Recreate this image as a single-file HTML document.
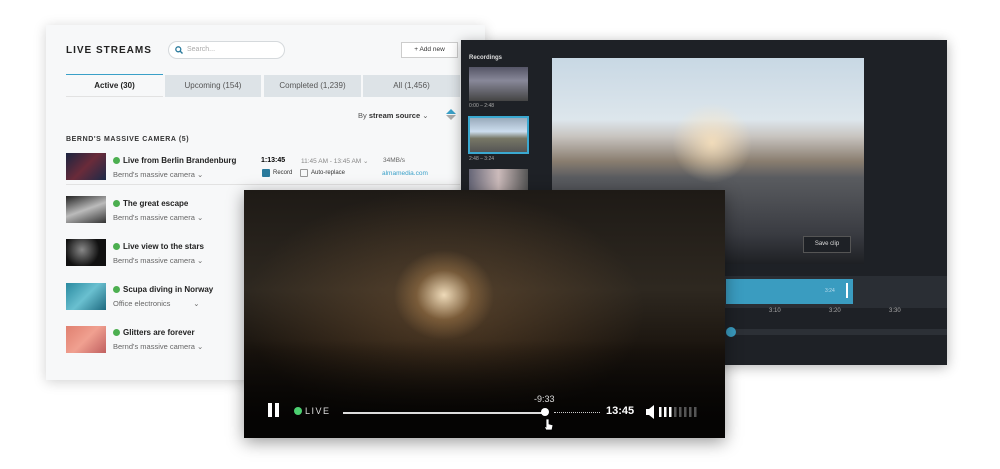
<!DOCTYPE html>
<html><head><style>
*{margin:0;padding:0;box-sizing:border-box}
body{width:1000px;height:469px;background:#fff;position:relative;overflow:hidden;font-family:"Liberation Sans",sans-serif}
.a{position:absolute}
#left{left:46px;top:25px;width:439px;height:355px;background:#f7f8f9;box-shadow:0 2px 12px rgba(0,0,0,.18)}
.tab{position:absolute;top:50px;height:22px;font-size:8px;color:#555;text-align:center;line-height:22px;background:#dde3e7}
.row .th{position:absolute;left:20px;width:40px;height:27px}
.t{position:absolute;left:67px;font-size:8px;font-weight:bold;color:#222}
.t:before{content:"";display:inline-block;width:7px;height:7px;border-radius:50%;background:#4caf50;margin-right:3px;vertical-align:-1px}
.s{position:absolute;left:67px;font-size:7.5px;color:#666}
#dark{left:461px;top:40px;width:486px;height:325px;background:#1e2126;box-shadow:0 2px 12px rgba(0,0,0,.3)}
#front{left:244px;top:190px;width:481px;height:248px;background:#1a140e;box-shadow:0 4px 16px rgba(0,0,0,.4);overflow:hidden}
</style></head><body>
<div id="left" class="a">
 <div class="a" style="left:20px;top:20px;font-size:10px;font-weight:bold;letter-spacing:1px;color:#222">LIVE STREAMS</div>
 <div class="a" style="left:122px;top:16px;width:117px;height:18px;border:1px solid #d5d9dc;border-radius:9px;background:#fff;font-size:7px;color:#aaa;line-height:16px;padding-left:18px">Search...
  <svg class="a" style="left:6px;top:4px" width="8" height="8"><circle cx="3.3" cy="3.3" r="2.5" fill="none" stroke="#2a7a9c" stroke-width="1.3"/><path d="M5 5l2.5 2.5" stroke="#2a7a9c" stroke-width="1.4"/></svg></div>
 <div class="a" style="left:355px;top:17px;width:57px;height:16px;border:1px solid #ccc;background:#fff;font-size:6.5px;text-align:center;line-height:14px;color:#333">+ Add new</div>
 <div class="a" style="left:20px;top:49px;width:97px;height:2px;background:#3aa0c8"></div>
 <div class="tab" style="left:20px;width:97px;background:#f7f8f9;color:#222;font-weight:bold;border-bottom:1px solid #e2e2e2">Active (30)</div>
 <div class="tab" style="left:119px;width:96px">Upcoming (154)</div>
 <div class="tab" style="left:218px;width:97px">Completed (1,239)</div>
 <div class="tab" style="left:317px;width:97px">All (1,456)</div>
 <div class="a" style="left:312px;top:86px;font-size:7.5px;color:#555">By <b style="color:#333">stream source</b> ⌄</div>
 <div class="a" style="left:400px;top:84px;width:0;height:0;border:5px solid transparent;border-bottom:5px solid #3aa0c8;border-top:0"></div>
 <div class="a" style="left:400px;top:90px;width:0;height:0;border:5px solid transparent;border-top:5px solid #aaa;border-bottom:0"></div>
 <div class="a" style="left:20px;top:111px;font-size:7px;font-weight:bold;letter-spacing:.6px;color:#333">BERND'S MASSIVE CAMERA (5)</div>
 <div class="row">
  <div class="th a" style="top:128px;background:linear-gradient(135deg,#1a2440,#6a2b3a 50%,#1c2a48)"></div>
  <div class="t" style="top:131px">Live from Berlin Brandenburg</div><div class="s" style="top:145px">Bernd's massive camera ⌄</div>
  <div class="a" style="left:215px;top:132px;font-size:7px;font-weight:bold">1:13:45</div>
  <div class="a" style="left:255px;top:132px;font-size:6.5px;color:#888">11:45 AM - 13:45 AM ⌄</div>
  <div class="a" style="left:337px;top:132px;font-size:6.5px;color:#666">34MB/s</div>
  <div class="a" style="left:216px;top:144px;width:8px;height:8px;background:#2a7a9c;border-radius:1px"></div>
  <div class="a" style="left:227px;top:145px;font-size:6px;color:#333">Record</div>
  <div class="a" style="left:254px;top:144px;width:8px;height:8px;border:1px solid #999;border-radius:1px"></div>
  <div class="a" style="left:265px;top:145px;font-size:6px;color:#333">Auto-replace</div>
  <div class="a" style="left:336px;top:145px;font-size:6.5px;color:#3aa0c8">almamedia.com</div>
  <div class="a" style="left:20px;top:159px;width:394px;height:1px;background:#e2e2e2"></div>
  <div class="th a" style="top:171px;background:linear-gradient(160deg,#222,#bbb 50%,#333)"></div>
  <div class="t" style="top:174px">The great escape</div><div class="s" style="top:188px">Bernd's massive camera ⌄</div>
  <div class="th a" style="top:214px;background:radial-gradient(circle at 40% 40%,#888,#111 60%)"></div>
  <div class="t" style="top:217px">Live view to the stars</div><div class="s" style="top:231px">Bernd's massive camera ⌄</div>
  <div class="th a" style="top:258px;background:linear-gradient(135deg,#2a8aa0,#6ac0d0,#1e6a80)"></div>
  <div class="t" style="top:260px">Scupa diving in Norway</div><div class="s" style="top:274px">Office electronics &nbsp; &nbsp; &nbsp; &nbsp; &nbsp; ⌄</div>
  <div class="th a" style="top:301px;background:linear-gradient(135deg,#e08070,#f0a090,#c06060)"></div>
  <div class="t" style="top:303px">Glitters are forever</div><div class="s" style="top:317px">Bernd's massive camera ⌄</div>
 </div>
</div>
<div id="dark" class="a">
 <div class="a" style="left:8px;top:15px;font-size:6px;font-weight:bold;color:#ddd">Recordings</div>
 <div class="a" style="left:8px;top:27px;width:59px;height:34px;background:linear-gradient(#556,#889 40%,#444)"></div>
 <div class="a" style="left:8px;top:63px;font-size:5px;color:#aaa">0:00 – 2:48</div>
 <div class="a" style="left:7px;top:76px;width:61px;height:38px;border:2px solid #3aa8d0;background:linear-gradient(#9ab 0%,#cde 40%,#776 60%,#555)"></div>
 <div class="a" style="left:8px;top:116px;font-size:5px;color:#aaa">2:48 – 3:24</div>
 <div class="a" style="left:8px;top:129px;width:59px;height:22px;background:linear-gradient(90deg,#667,#cbb,#555)"></div>
 <div class="a" style="left:91px;top:18px;width:312px;height:206px;background:radial-gradient(ellipse 40px 40px at 160px 85px,rgba(255,230,190,.8),transparent),linear-gradient(#c8d8e4 0%,#dde6ec 30%,#c8c4c0 38%,#8a7e70 50%,#5a5c60 58%,#3a3c42 85%,#1e2024)"></div>
 <div class="a" style="left:342px;top:196px;width:48px;height:17px;border:1px solid #555;background:#1e2126;color:#ddd;font-size:6px;text-align:center;line-height:15px">Save clip</div>
 <div class="a" style="left:0;top:236px;width:486px;height:32px;background:#2a2e34"></div>
 <div class="a" style="left:265px;top:239px;width:127px;height:25px;background:#3a9cc0"></div>
 <div class="a" style="left:385px;top:243px;width:2px;height:15px;background:#fff"></div>
 <div class="a" style="left:364px;top:248px;font-size:5px;color:#bde">3:24</div>
 <div class="a" style="left:308px;top:268px;font-size:6px;color:#aaa">3:10</div>
 <div class="a" style="left:368px;top:268px;font-size:6px;color:#aaa">3:20</div>
 <div class="a" style="left:428px;top:268px;font-size:6px;color:#aaa">3:30</div>
 <div class="a" style="left:265px;top:289px;width:221px;height:6px;background:#2c3036"></div>
 <div class="a" style="left:265px;top:287px;width:10px;height:10px;border-radius:50%;background:#3a9cc0"></div>
</div>
<div id="front" class="a">
 <div class="a" style="left:0;top:0;width:481px;height:248px;background:radial-gradient(ellipse 50px 45px at 200px 105px,rgba(255,235,200,.9),rgba(200,150,90,.35) 55%,transparent),radial-gradient(ellipse 200px 120px at 200px 120px,rgba(140,100,60,.45),transparent),linear-gradient(#1e1a16,#2e2820 40%,#1a140e 65%,#0a0806)"></div>
 <div class="a" style="left:0;top:150px;width:481px;height:98px;background:linear-gradient(rgba(0,0,0,0),#050403 80%)"></div>
 <div class="a" style="left:24px;top:213px;width:4px;height:14px;background:#fff"></div>
 <div class="a" style="left:31px;top:213px;width:4px;height:14px;background:#fff"></div>
 <div class="a" style="left:50px;top:217px;width:8px;height:8px;border-radius:50%;background:#4ccf70"></div>
 <div class="a" style="left:61px;top:216px;font-size:9px;color:#ddd;letter-spacing:1.5px">LIVE</div>
 <div class="a" style="left:99px;top:222px;width:202px;height:1.5px;background:#ddd"></div>
 <div class="a" style="left:297px;top:218px;width:8px;height:8px;border-radius:50%;background:#fff"></div>
 <div class="a" style="left:310px;top:222px;width:46px;border-top:1px dotted #ccc"></div>
 <div class="a" style="left:290px;top:204px;font-size:9px;color:#ddd">-9:33</div>
 <div class="a" style="left:362px;top:215px;font-size:11px;font-weight:bold;color:#fff">13:45</div>
 <svg class="a" style="left:402px;top:215px" width="60" height="14"><path d="M0 4h3l5-4v14l-5-4H0z" fill="#fff"/><g fill="#fff"><rect x="13" y="2" width="2.5" height="10"/><rect x="18" y="2" width="2.5" height="10"/><rect x="23" y="2" width="2.5" height="10"/></g><g fill="#555"><rect x="28" y="2" width="2.5" height="10"/><rect x="33" y="2" width="2.5" height="10"/><rect x="38" y="2" width="2.5" height="10"/><rect x="43" y="2" width="2.5" height="10"/><rect x="48" y="2" width="2.5" height="10"/></g></svg>
 <svg class="a" style="left:299px;top:228px" width="12" height="14"><path d="M3 1v8l-2-1 2 4h6l1-5-4-1V1z" fill="#fff" stroke="#000" stroke-width=".8"/></svg>
</div>
</body></html>
